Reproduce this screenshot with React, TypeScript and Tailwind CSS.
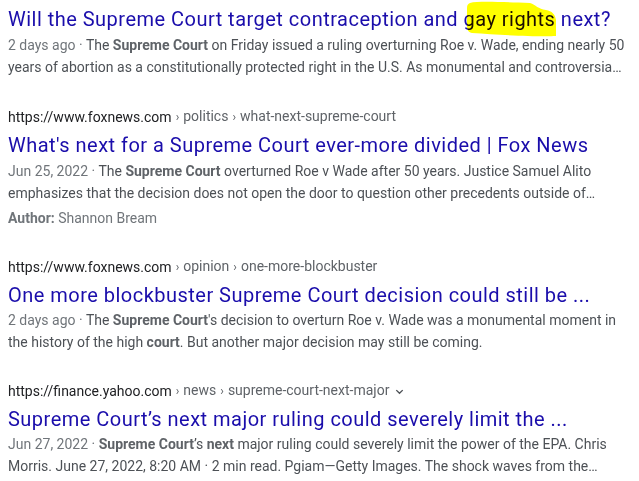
import React from "react";

const Url = ({ host, path, chevron }: { host: string; path: string[]; chevron?: boolean }) => (
  <div className="flex items-center text-[14px] leading-[22px] whitespace-nowrap">
    <span className="text-[#202124]">{host}</span>
    {path.map((p, i) => (
      <span key={i} className="text-[#5f6368]">
        <span className="text-[12px] px-[4px]">›</span>
        {p}
      </span>
    ))}
    {chevron && (
      <svg width="11" height="11" viewBox="0 0 24 24" className="ml-[5px] mt-[2px]">
        <path d="M5 9l7 7 7-7" fill="none" stroke="#4d5156" strokeWidth="3" />
      </svg>
    )}
  </div>
);

const Title = ({ children }: { children: React.ReactNode }) => (
  <div className="pt-[4px] text-[20px] leading-[26px] tracking-[0.48px] text-[#1a0dab] whitespace-nowrap">
    {children}
  </div>
);

const B = ({ children }: { children: React.ReactNode }) => (
  <span className="font-bold text-[#5f6368]">{children}</span>
);

const Date = ({ d }: { d: string }) => <span className="text-[#70757a]">{d} · </span>;

const Snippet = ({ children, tight }: { children: React.ReactNode; tight?: boolean }) => (
  <div
    className={
      tight
        ? "mt-[1px] text-[14px] leading-[22px] text-[#4d5156] whitespace-nowrap"
        : "mt-[2px] text-[14px] leading-[22px] text-[#4d5156] whitespace-nowrap"
    }
  >
    {children}
  </div>
);

export default function App() {
  return (
    <div
      className="w-[639px] h-[481px] bg-white overflow-hidden pl-[8px] pt-[2px] relative"
      style={{ fontFamily: "Roboto, 'Liberation Sans', sans-serif" }}
    >
      {/* Result 1 */}
      <div>
        <Title>Will the Supreme Court target contraception and gay rights next?</Title>
        <Snippet>
          <Date d="2 days ago" />
          The <B>Supreme Court</B> on Friday issued a ruling overturning Roe v. Wade, ending nearly 50
          <br />
          years of abortion as a constitutionally protected right in the U.S. As monumental and controversia…
        </Snippet>
      </div>

      {/* Result 2 */}
      <div className="mt-[27px]">
        <Url host="https://www.foxnews.com" path={["politics", "what-next-supreme-court"]} />
        <Title>What's next for a Supreme Court ever-more divided | Fox News</Title>
        <Snippet>
          <Date d="Jun 25, 2022" />
          The <B>Supreme Court</B> overturned Roe v Wade after 50 years. Justice Samuel Alito
          <br />
          emphasizes that the decision does not open the door to question other precedents outside of…
        </Snippet>
        <div className="mt-[3px] text-[14px] leading-[22px] text-[#70757a] whitespace-nowrap">
          <span className="font-bold">Author:</span> Shannon Bream
        </div>
      </div>

      {/* Result 3 */}
      <div className="mt-[26px]">
        <Url host="https://www.foxnews.com" path={["opinion", "one-more-blockbuster"]} />
        <Title>One more blockbuster Supreme Court decision could still be ...</Title>
        <Snippet tight>
          <Date d="2 days ago" />
          The <B>Supreme Court</B>'s decision to overturn Roe v. Wade was a monumental moment in
          <br />
          the history of the high <B>court</B>. But another major decision may still be coming.
        </Snippet>
      </div>

      {/* Result 4 */}
      <div className="mt-[26px]">
        <Url host="https://finance.yahoo.com" path={["news", "supreme-court-next-major"]} chevron />
        <Title>Supreme Court’s next major ruling could severely limit the ...</Title>
        <Snippet tight>
          <Date d="Jun 27, 2022" />
          <B>Supreme Court</B>’s <B>next</B> major ruling could severely limit the power of the EPA. Chris
          <br />
          Morris. June 27, 2022, 8:20 AM · 2 min read. Pgiam—Getty Images. The shock waves from the…
        </Snippet>
      </div>

      {/* Highlighter mark */}
      <svg
        className="absolute left-0 top-0 pointer-events-none mix-blend-multiply"
        width="639"
        height="60"
        viewBox="0 0 639 60"
      >
        <path
          d="M470,3 C478,1 500,2 530,3 C536,5 538,9 546,10 C552,11 555,14 556,20 L556,36 C540,37 500,35 472,33 C467,32 467,28 467,24 L467,8 C467,5 468,4 470,3 Z"
          fill="#ffff00"
        />
      </svg>
    </div>
  );
}
